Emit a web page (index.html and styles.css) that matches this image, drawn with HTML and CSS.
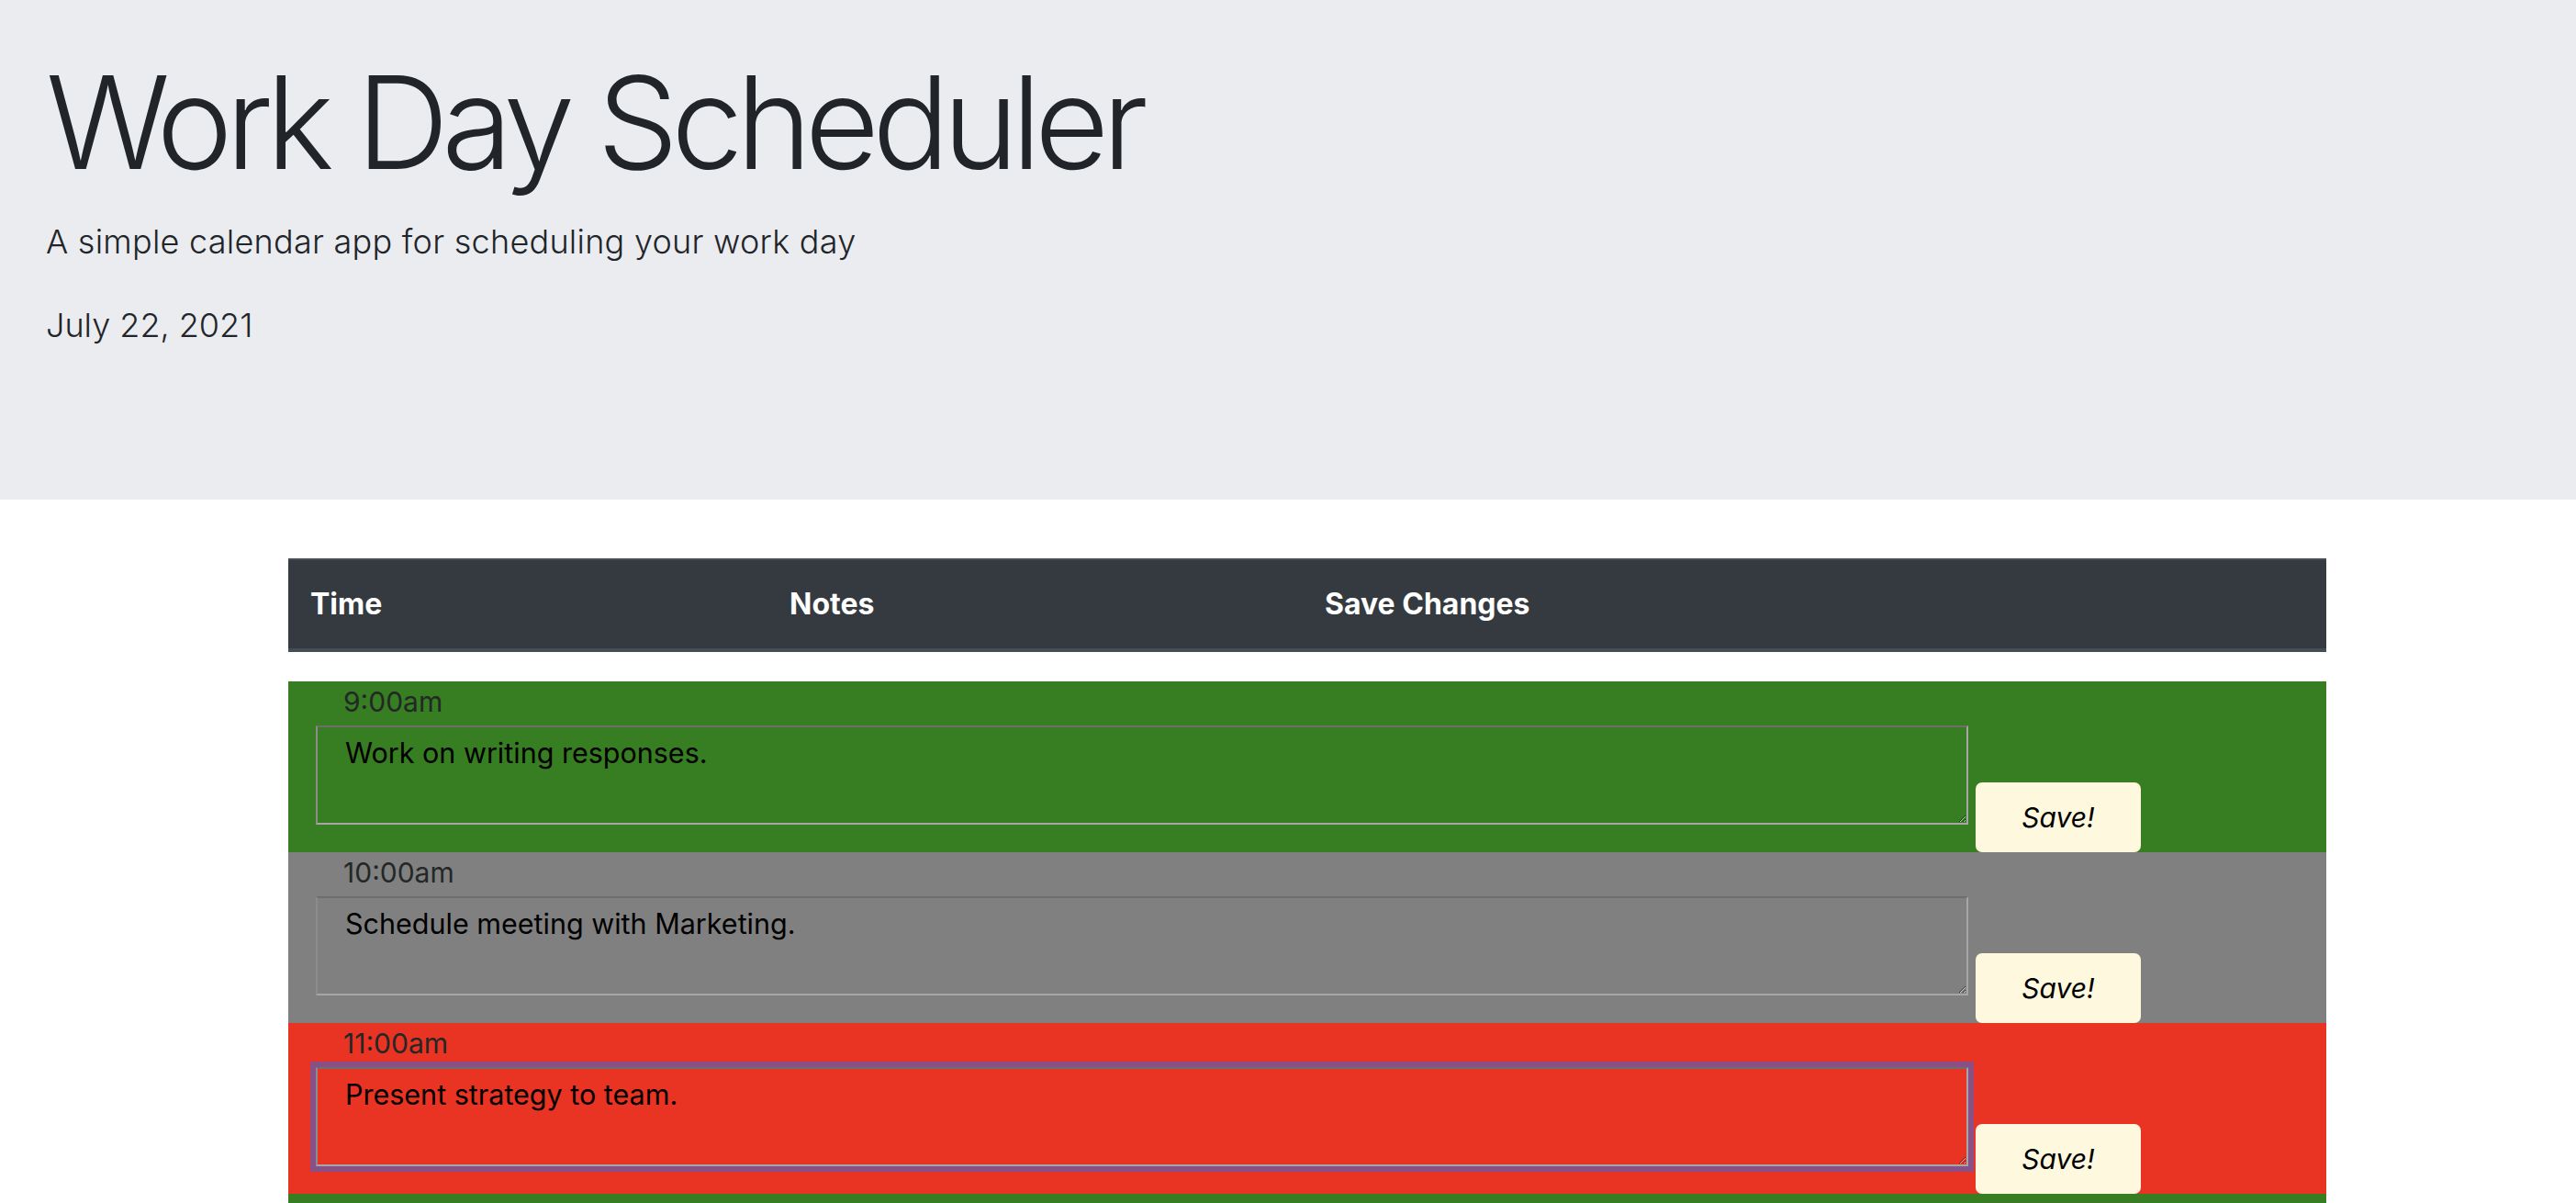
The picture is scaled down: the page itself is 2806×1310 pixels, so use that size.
FILE: index.html
```html
<!DOCTYPE html>
<html lang="en">
<head>
<meta charset="utf-8">
<title>Work Day Scheduler</title>
<link rel="stylesheet" href="styles.css">
</head>
<body>
<header class="jumbotron">
  <h1 class="title">Work Day Scheduler</h1>
  <p class="lead">A simple calendar app for scheduling your work day</p>
  <p class="date">July 22, 2021</p>
</header>
<main class="container">
  <table class="table">
    <thead>
      <tr>
        <th class="col-time">Time</th>
        <th class="col-notes">Notes</th>
        <th class="col-save">Save Changes</th>
      </tr>
    </thead>
  </table>
  <div class="schedule">
    <div class="time-row future">
      <div class="block">
        <div class="hour">9:00am</div>
        <textarea class="notes">Work on writing responses.</textarea>
      </div>
      <button class="save">Save!</button>
    </div>
    <div class="time-row past">
      <div class="block">
        <div class="hour">10:00am</div>
        <textarea class="notes">Schedule meeting with Marketing.</textarea>
      </div>
      <button class="save">Save!</button>
    </div>
    <div class="time-row present">
      <div class="block">
        <div class="hour">11:00am</div>
        <textarea class="notes focused">Present strategy to team.</textarea>
      </div>
      <button class="save">Save!</button>
    </div>
    <div class="time-row future"></div>
  </div>
</main>
</body>
</html>
```
FILE: styles.css
```css
* {
  box-sizing: border-box;
}

html, body {
  margin: 0;
  padding: 0;
  background: #ffffff;
  font-family: Inter, "Noto Sans", "Liberation Sans", sans-serif;
  color: #212529;
}

.jumbotron {
  background: #ebecf0;
  height: 544px;
  padding: 49px 50px 0 50px;
}

.title {
  margin: 0;
  font-size: 140px;
  line-height: 168px;
  font-weight: 300;
  letter-spacing: -7.6px;
}

.lead {
  margin: 19px 0 0 0;
  font-size: 36px;
  line-height: 54px;
  font-weight: 300;
  letter-spacing: 0.25px;
}

.date {
  margin: 37px 0 0 0;
  font-size: 36px;
  line-height: 54px;
  font-weight: 300;
}

.container {
  margin: 64px 0 0 314px;
  width: 2220px;
}

.table {
  width: 100%;
  border-collapse: collapse;
  margin: 0 0 32px 0;
}

.table th {
  background: #343a40;
  color: #ffffff;
  text-align: left;
  font-size: 32px;
  line-height: 48px;
  font-weight: 700;
  padding: 24px;
  border-top: 2px solid #454d55;
  border-bottom: 4px solid #454d55;
}

.col-time {
  width: 522px;
}

.col-notes {
  width: 583px;
}

.time-row {
  display: flex;
  align-items: flex-end;
  height: 186px;
}

.future {
  background: #377d22;
}

.past {
  background: #808080;
}

.present {
  background: #e93323;
}

.block {
  margin: 0 0 30px 30px;
  width: 1800px;
}

.hour {
  padding-left: 30px;
  font-size: 30px;
  line-height: 44px;
  height: 48px;
  color: #232827;
}

.notes {
  display: block;
  width: 1800px;
  height: 108px;
  margin: 0;
  padding: 10px 30px;
  font-family: Inter, "Noto Sans", "Liberation Sans", sans-serif;
  font-size: 30.5px;
  line-height: 36px;
  color: #000000;
  background: transparent;
  border-width: 2px;
  border-style: solid;
  border-color: #6e6e6e #a6a6a6 #a6a6a6 #8c8c8c;
}

.notes.focused {
  outline: 6px solid #8a4f86;
  outline-offset: 0;
}

.save {
  margin-left: 8px;
  width: 180px;
  height: 76px;
  border: none;
  border-radius: 7px;
  background: #fef8df;
  color: #000000;
  font-family: Inter, "Noto Sans", "Liberation Sans", sans-serif;
  font-size: 30px;
  font-style: italic;
  padding: 0;
}
```
